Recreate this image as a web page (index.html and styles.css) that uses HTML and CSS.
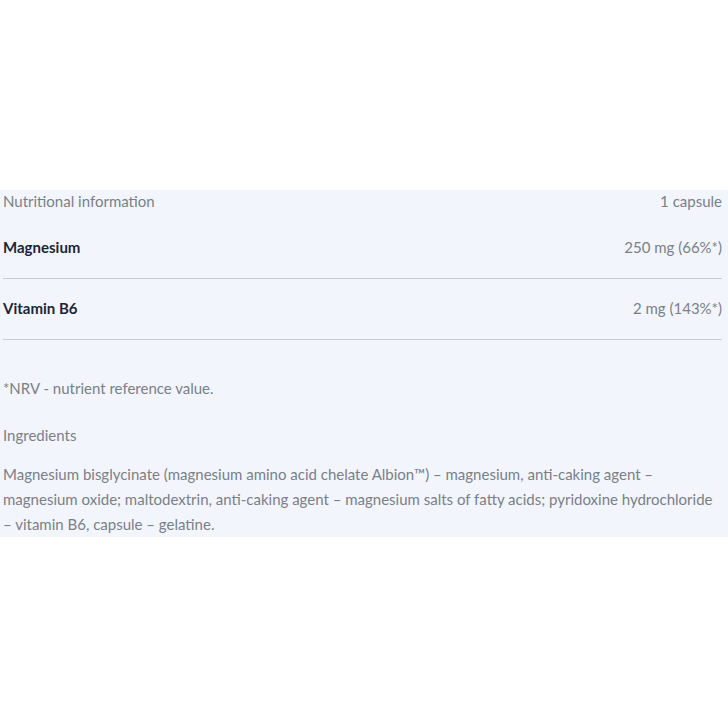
FILE: index.html
```html
<!DOCTYPE html>
<html lang="en">
  <head>
    <meta charset="UTF-8" />
    <meta name="viewport" content="width=device-width, initial-scale=1.0" />
    <title>Nutritional information</title>
    <link rel="stylesheet" href="styles.css">
  </head>
  <body>
    <div class="panel">
      <div class="table">
        <div class="row head">
          <span>Nutritional information</span>
          <span>1 capsule</span>
        </div>
        <div class="row item">
          <span class="name">Magnesium</span>
          <span>250 mg (66%*)</span>
        </div>
        <div class="row item">
          <span class="name">Vitamin B6</span>
          <span>2 mg (143%*)</span>
        </div>
      </div>
      <p class="note">*NRV - nutrient reference value.</p>
      <h2 class="title">Ingredients</h2>
      <p class="ingredients">
        Magnesium bisglycinate (magnesium amino acid chelate Albion™) – magnesium, anti-caking agent – magnesium oxide; maltodextrin, anti-caking agent – magnesium salts of fatty acids; pyridoxine hydrochloride – vitamin B6, capsule – gelatine.
      </p>
    </div>
  </body>
</html>
```

FILE: styles.css
```css
* {
  margin: 0;
  padding: 0;
  box-sizing: border-box;
}

body {
  font-family: "Lato", "Open Sans", sans-serif;
  background: #ffffff;
  color: #7a7f88;
  font-size: 15px;
  padding-top: 190px;
}

.panel {
  background: #f2f6fc;
  padding: 0 6px 0 3px;
}

.row {
  display: flex;
  justify-content: space-between;
  line-height: 22px;
}

.head {
  padding-bottom: 6px;
}

.item {
  padding: 18px 0 20px;
  border-bottom: 1px solid #c9cdd3;
}

.name {
  color: #1b2536;
  font-weight: 700;
}

.note {
  margin-top: 36px;
  line-height: 25px;
}

.title {
  font-size: 15px;
  font-weight: 400;
  line-height: 25px;
  margin-top: 22px;
}

.ingredients {
  margin-top: 14px;
  line-height: 25px;
}
```
